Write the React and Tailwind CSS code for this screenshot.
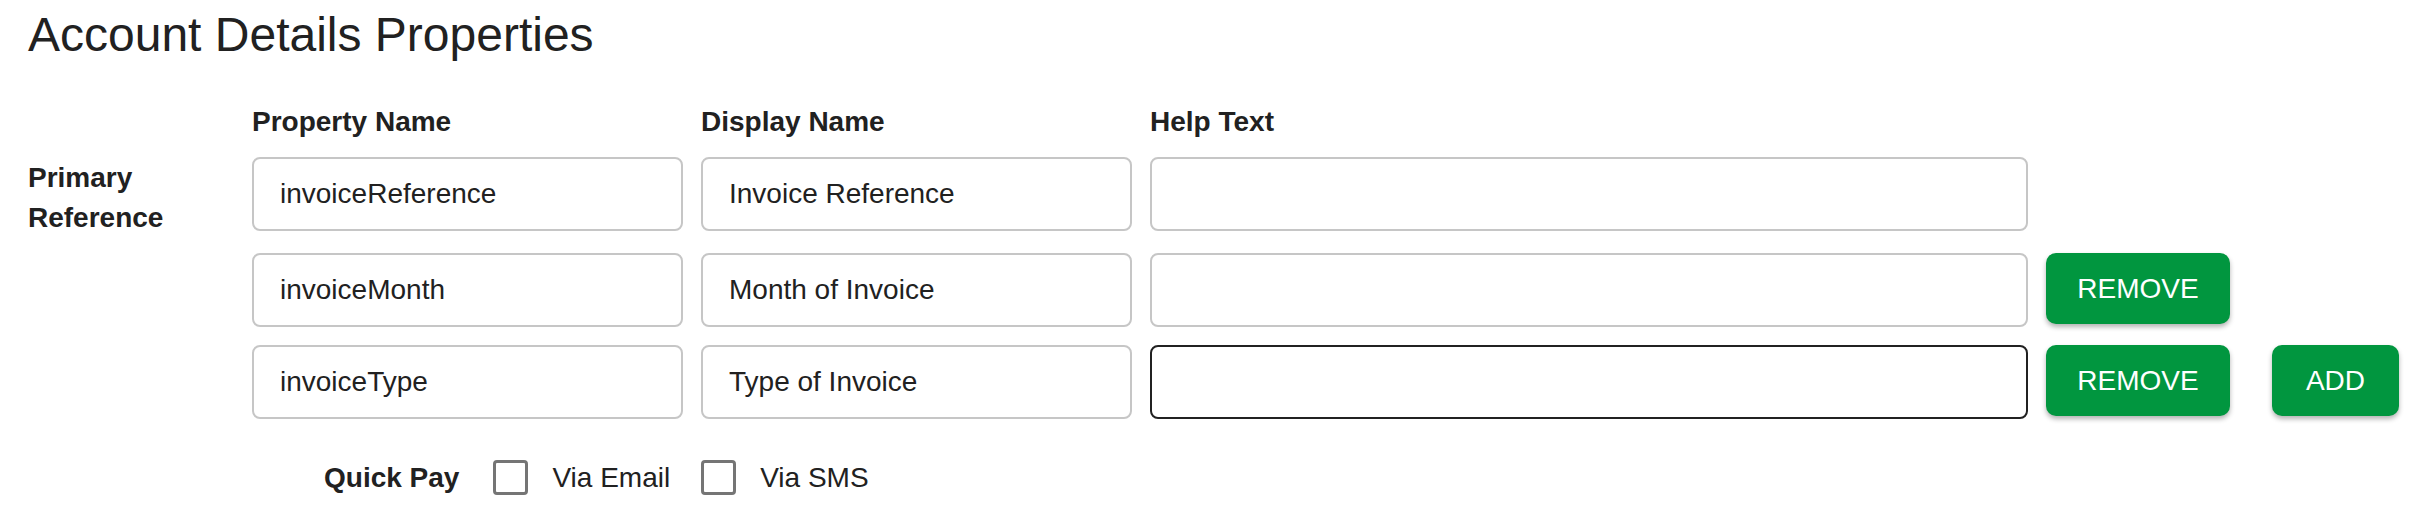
const font = { fontFamily: '"Liberation Sans", Arial, sans-serif' };

function Field({ value, width, active }) {
  return (
    <input
      readOnly
      value={value}
      className={`h-[74px] ${width} shrink-0 rounded-[8px] border-2 bg-white pl-[26px] pr-4 text-[28px] text-[#212121] outline-none ${
        active ? "border-[#212121]" : "border-[#c6c6c6]"
      }`}
    />
  );
}

function GreenButton({ children, width }) {
  return (
    <button
      type="button"
      className={`h-[71px] ${width} shrink-0 rounded-[10px] bg-[#01963f] text-[28px] text-white shadow-[0_3px_5px_rgba(0,0,0,0.3)]`}
    >
      {children}
    </button>
  );
}

function Check({ label }) {
  return (
    <label className="flex items-center gap-[24px]">
      <input
        type="checkbox"
        className="h-[35px] w-[35px] appearance-none rounded-[4px] border-[3px] border-[#757575] bg-white"
      />
      <span className="text-[28px] leading-[28px] text-[#212121]">{label}</span>
    </label>
  );
}

const rows = [
  { name: "invoiceReference", display: "Invoice Reference" },
  { name: "invoiceMonth", display: "Month of Invoice" },
  { name: "invoiceType", display: "Type of Invoice" },
];

export default function App() {
  return (
    <div className="min-h-screen bg-white pl-[28px] pt-[11px] text-[#212121]" style={font}>
      {/* Title */}
      <h1 className="text-[48px] leading-[48px] font-normal">Account Details Properties</h1>

      {/* Column headers */}
      <div className="mt-[49px] flex gap-[18px] pl-[224px] text-[28px] leading-[28px] font-bold">
        <div className="w-[431px]">Property Name</div>
        <div className="w-[431px]">Display Name</div>
        <div className="w-[878px]">Help Text</div>
      </div>

      {/* Row 1 */}
      <div className="mt-[21px] flex h-[74px] items-start">
        <div className="w-[224px] shrink-0 pt-[1px] text-[28px] leading-[40px] font-bold">
          Primary
          <br />
          Reference
        </div>
        <div className="flex gap-[18px]">
          <Field value={rows[0].name} width="w-[431px]" />
          <Field value={rows[0].display} width="w-[431px]" />
          <Field value="" width="w-[878px]" />
        </div>
      </div>

      {/* Row 2 */}
      <div className="mt-[22px] flex items-start pl-[224px]">
        <div className="flex items-start gap-[18px]">
          <Field value={rows[1].name} width="w-[431px]" />
          <Field value={rows[1].display} width="w-[431px]" />
          <Field value="" width="w-[878px]" />
          <GreenButton width="w-[184px]">REMOVE</GreenButton>
        </div>
      </div>

      {/* Row 3 */}
      <div className="mt-[18px] flex items-start pl-[224px]">
        <div className="flex items-start gap-[18px]">
          <Field value={rows[2].name} width="w-[431px]" />
          <Field value={rows[2].display} width="w-[431px]" />
          <Field value="" width="w-[878px]" active />
          <GreenButton width="w-[184px]">REMOVE</GreenButton>
          <div className="ml-[24px]">
            <GreenButton width="w-[127px]">ADD</GreenButton>
          </div>
        </div>
      </div>

      {/* Quick pay */}
      <div className="mt-[41px] flex h-[35px] items-center pl-[296px]">
        <span className="text-[28px] leading-[28px] font-bold">Quick Pay</span>
        <div className="ml-[34px] flex items-center gap-[31px]">
          <Check label="Via Email" />
          <Check label="Via SMS" />
        </div>
      </div>
    </div>
  );
}
